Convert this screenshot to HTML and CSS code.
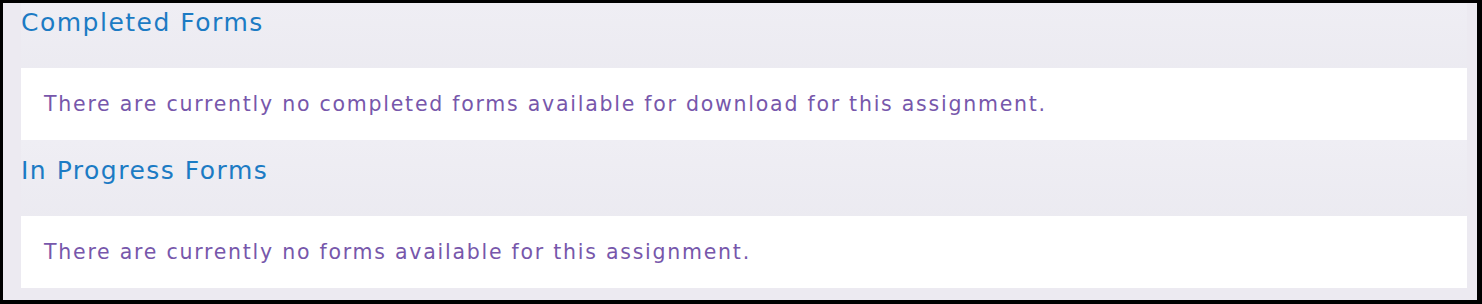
FILE: index.html
```html
<!DOCTYPE html>
<html lang="en">
<head>
    <meta charset="UTF-8">
    <title>Assignment Forms</title>
    <link rel="stylesheet" href="styles.css">
</head>
<body>
    <div class="frame">
        <section class="forms-section">
            <h2>Completed Forms</h2>
            <div class="panel">There are currently no completed forms available for download for this assignment.</div>
        </section>
        <section class="forms-section">
            <h2>In Progress Forms</h2>
            <div class="panel">There are currently no forms available for this assignment.</div>
        </section>
    </div>
</body>
</html>
```

FILE: styles.css
```css
* {
    box-sizing: border-box;
    margin: 0;
    padding: 0;
}

html, body {
    height: 100%;
}

body {
    background: #000;
    font-family: 'DejaVu Sans', 'Noto Sans', sans-serif;
}

.frame {
    height: 100%;
    border-top: 3px solid #000;
    border-left: 3px solid #000;
    border-right: 5px solid #000;
    border-bottom: 4px solid #000;
    background: #eceaf1;
    padding: 0 10px 0 18px;
}

.forms-section {
    background: linear-gradient(180deg, #efeef4 0%, #e8e7ee 100%);
    padding-top: 3px;
}

.forms-section + .forms-section {
    padding-top: 14px;
}

h2 {
    color: #1c7bc4;
    font-weight: 400;
    font-size: 25px;
    line-height: 34px;
    height: 62px;
    letter-spacing: 1.5px;
}

.panel {
    background: #fff;
    color: #7757ab;
    font-size: 20.5px;
    line-height: 72px;
    height: 72px;
    padding-left: 23px;
    letter-spacing: 1.75px;
}
```
